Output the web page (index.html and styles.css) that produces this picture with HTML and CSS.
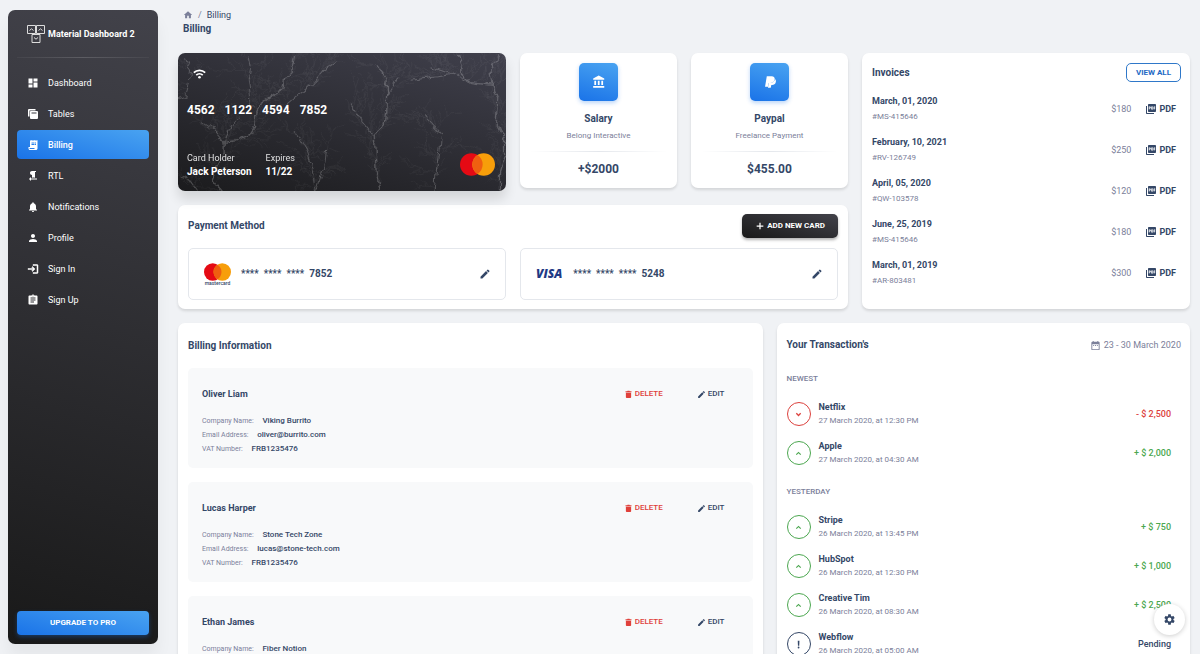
FILE: index.html
```html
<!DOCTYPE html>
<html lang="en">
<head>
<meta charset="utf-8">
<meta name="viewport" content="width=device-width, initial-scale=1">
<title>Billing - Material Dashboard 2</title>
<link rel="stylesheet" href="styles.css">
</head>
<body>
<svg class="sprite" aria-hidden="true">
  <symbol id="i-dashboard" viewBox="0 0 24 24"><path d="M3 13h8V3H3v10zm0 8h8v-6H3v6zm10 0h8V11h-8v10zm0-18v6h8V3h-8z"/></symbol>
  <symbol id="i-tables" viewBox="0 0 24 24"><path d="M2 4v13h3V5h12V2H4a2 2 0 0 0-2 2z"/><path fill-rule="evenodd" d="M8 6h12a2 2 0 0 1 2 2v12a2 2 0 0 1-2 2H8a2 2 0 0 1-2-2V8c0-1.100.9-2 2-2zm1 3v2h10V9z"/></symbol>
  <symbol id="i-billing" viewBox="0 0 24 24"><path fill-rule="evenodd" d="M19.500 3.500L18 2l-1.500 1.500L15 2l-1.500 1.500L12 2l-1.500 1.500L9 2 7.500 3.500 6 2v14H3v3c0 1.660 1.340 3 3 3h12c1.660 0 3-1.340 3-3V2l-1.500 1.500zM15 20H6c-.55 0-1-.45-1-1v-1h10v2zM9 7h6v2H9zm7 0h2v2h-2zm-7 3h6v2H9zm7 0h2v2h-2z"/></symbol>
  <symbol id="i-rtl" viewBox="0 0 24 24"><path d="M10 10v5h2V4h2v11h2V4h2V2h-8C7.790 2 6 3.790 6 6s1.790 4 4 4zm-2 7v-3l-4 4 4 4v-3h12v-2H8z"/><path d="M11 4h4v11h-4z"/></symbol>
  <symbol id="i-bell" viewBox="0 0 24 24"><path d="M12 22c1.100 0 2-.9 2-2h-4c0 1.100.89 2 2 2zm6-6v-5c0-3.070-1.640-5.640-4.500-6.320V4c0-.83-.67-1.500-1.500-1.500s-1.500.67-1.500 1.500v.68C7.630 5.360 6 7.920 6 11v5l-2 2v1h16v-1l-2-2z"/></symbol>
  <symbol id="i-person" viewBox="0 0 24 24"><path d="M12 12c2.210 0 4-1.790 4-4s-1.790-4-4-4-4 1.790-4 4 1.790 4 4 4zm0 2c-2.670 0-8 1.340-8 4v2h16v-2c0-2.660-5.330-4-8-4z"/></symbol>
  <symbol id="i-login" viewBox="0 0 24 24"><path d="M11 7L9.600 8.400l2.600 2.600H2v2h10.200l-2.600 2.600L11 17l5-5-5-5zm9 12h-8v2h8c1.100 0 2-.9 2-2V5c0-1.100-.9-2-2-2h-8v2h8v14z" stroke="currentColor"/></symbol>
  <symbol id="i-assignment" viewBox="0 0 24 24"><path d="M19 3h-4.180C14.400 1.840 13.300 1 12 1c-1.300 0-2.400.84-2.820 2H5c-1.100 0-2 .9-2 2v14c0 1.100.9 2 2 2h14c1.100 0 2-.9 2-2V5c0-1.100-.9-2-2-2zm-7 0c.55 0 1 .45 1 1s-.45 1-1 1-1-.45-1-1 .45-1 1-1zm2 14H7v-2h7v2zm3-4H7v-2h10v2zm0-4H7V7h10v2z"/></symbol>
  <symbol id="i-home" viewBox="0 0 24 24"><path d="M10 20v-6h4v6h5v-8h3L12 3 2 12h3v8z"/></symbol>
  <symbol id="i-wifi" viewBox="0 0 24 24"><g fill="none" stroke="currentColor" stroke-width="3.200"><path d="M1.500 10.500a15 15 0 0 1 21 0M6 15a8.800 8.800 0 0 1 12 0"/></g><circle cx="12" cy="19" r="2.400"/></symbol>
  <symbol id="i-bank" viewBox="0 0 24 24"><path d="M4 10v7h3v-7H4zm6 0v7h3v-7h-3zM2 22h19v-3H2v3zm14-12v7h3v-7h-3zm-4.500-9L2 6v2h19V6l-9.500-5z"/></symbol>
  <symbol id="i-paypal" viewBox="0 0 24 24"><path d="M6.500 2h8.200c4 0 6 2.200 5.300 5.800-.9 4.200-3.700 6-7.600 6H9.800L8.600 20H3.500z"/><path d="M20.500 7c1.800 1.700 2 3.500 1.400 5.500-.8 3-3 4.500-6.400 4.500h-1.200L13.300 22H8.500l.5-3 1-5.200h2.500c4.200 0 7.100-2.300 8-6.800z"/></symbol>
  <symbol id="i-edit" viewBox="0 0 24 24"><path d="M3 17.250V21h3.750L17.810 9.940l-3.750-3.750L3 17.250zM20.710 7.040a1 1 0 0 0 0-1.410l-2.340-2.340a1 1 0 0 0-1.410 0l-1.830 1.830 3.750 3.750 1.830-1.830z"/></symbol>
  <symbol id="i-delete" viewBox="0 0 24 24"><path d="M5 19c0 1.100.9 2 2 2h10c1.100 0 2-.9 2-2V7H5v12zM20 3h-4.500l-1-1h-5l-1 1H4v3h16V3z"/></symbol>
  <symbol id="i-add" viewBox="0 0 24 24"><path d="M20 13.500h-6.500V20h-3v-6.500H4v-3h6.500V4h3v6.500H20z"/></symbol>
  <symbol id="i-pdf" viewBox="0 0 24 24"><path d="M20 2H8c-1.100 0-2 .9-2 2v12c0 1.100.9 2 2 2h12c1.100 0 2-.9 2-2V4c0-1.100-.9-2-2-2zm-8.500 7.500c0 .83-.67 1.500-1.500 1.500H9v2H7.500V7H10c.83 0 1.500.67 1.500 1.500v1zm5 2c0 .83-.67 1.500-1.500 1.500h-2.500V7H15c.83 0 1.500.67 1.500 1.500v3zm4-3H19v1h1.500V11H19v2h-1.500V7h3v1.500zM9 9.500h1v-1H9v1zM4 6H2v14c0 1.100.9 2 2 2h14v-2H4V6zm10 5.500h1v-3h-1v3z"/></symbol>
  <symbol id="i-calendar" viewBox="0 0 24 24"><path d="M9 11H7v2h2v-2zm4 0h-2v2h2v-2zm4 0h-2v2h2v-2zm2-7h-1V2h-2v2H8V2H6v2H5c-1.110 0-2 .9-2 2v14a2 2 0 0 0 2 2h14c1.100 0 2-.9 2-2V6c0-1.100-.9-2-2-2zm0 16H5V9h14v11z"/></symbol>
  <symbol id="i-down" viewBox="0 0 24 24"><path d="M16.600 7.600L12 12.200 7.400 7.600 5 10l7 7 7-7z"/></symbol>
  <symbol id="i-up" viewBox="0 0 24 24"><path d="M12 7l-7 7 2.200 2.200L12 11.400l4.800 4.800L19 14z"/></symbol>
  <symbol id="i-exclaim" viewBox="0 0 24 24"><path d="M10 2h4.500l-.5 13h-3.500z"/><circle cx="12.200" cy="20" r="2.400"/></symbol>
  <symbol id="i-gear" viewBox="0 0 24 24"><path d="M19.140 12.940c.04-.3.060-.61.060-.94 0-.32-.02-.64-.07-.94l2.030-1.580a.49.49 0 0 0 .12-.61l-1.920-3.320a.49.49 0 0 0-.59-.22l-2.390.96c-.5-.38-1.030-.7-1.620-.94l-.36-2.540a.48.48 0 0 0-.48-.41h-3.840c-.24 0-.43.17-.47.41l-.36 2.540c-.59.24-1.130.57-1.620.94l-2.390-.96a.48.48 0 0 0-.59.22L2.740 8.870c-.12.21-.08.47.12.61l2.030 1.580c-.05.3-.09.63-.09.94s.02.64.07.94l-2.030 1.580a.49.49 0 0 0-.12.61l1.920 3.320c.12.22.37.29.59.22l2.390-.96c.5.38 1.030.7 1.620.94l.36 2.540c.05.24.24.41.48.41h3.840c.24 0 .44-.17.47-.41l.36-2.540c.59-.24 1.130-.56 1.620-.94l2.390.96c.22.08.47 0 .59-.22l1.920-3.320a.49.49 0 0 0-.12-.61l-2.010-1.580zM12 15.600a3.600 3.600 0 1 1 0-7.200 3.600 3.600 0 0 1 0 7.200z"/></symbol>
  <symbol id="i-rings" viewBox="0 0 34 22"><circle cx="11" cy="11" r="11" fill="#e50a14"/><circle cx="23" cy="11" r="11" fill="#f79e0a"/><path fill="#ef5f10" d="M17 1.780a11 11 0 0 1 0 18.440 11 11 0 0 1 0-18.440z"/></symbol>
</svg>

<div class="app">
  <aside class="sidebar">
    <a class="brand" href="#">
      <svg class="brand-logo" viewBox="0 0 18 18" fill="none" stroke="#ddd" aria-hidden="true"><path d="M.5 .5h8v8h-8zM9.500 .5h8v8h-8zM5 9.500h8v8H5z"/><path d="M2.500 5.500l2-1.700 2 1.700M11.500 5.500l2-1.700 2 1.700M7 12.500l2 1.700 2-1.700"/></svg>
      <span>Material Dashboard 2</span>
    </a>
    <hr class="sidebar-rule">
    <nav class="menu">
      <a href="#"><svg><use href="#i-dashboard"/></svg>Dashboard</a>
      <a href="#"><svg><use href="#i-tables"/></svg>Tables</a>
      <a href="#" class="active" aria-current="page"><svg><use href="#i-billing"/></svg>Billing</a>
      <a href="#"><svg><use href="#i-rtl"/></svg>RTL</a>
      <a href="#"><svg><use href="#i-bell"/></svg>Notifications</a>
      <a href="#"><svg><use href="#i-person"/></svg>Profile</a>
      <a href="#"><svg><use href="#i-login"/></svg>Sign In</a>
      <a href="#"><svg><use href="#i-assignment"/></svg>Sign Up</a>
    </nav>
    <a class="upgrade" href="#">UPGRADE TO PRO</a>
  </aside>

  <main class="main">
    <header class="page-head">
      <nav class="crumbs" aria-label="Breadcrumb">
        <a href="#" aria-label="Home"><svg><use href="#i-home"/></svg></a><span class="slash">/</span><span>Billing</span>
      </nav>
      <h1>Billing</h1>
    </header>

    <div class="grid">
      <div class="wallet">
        <section class="bank-card">
          <svg class="branches" viewBox="24 24 984 411" preserveAspectRatio="xMidYMid slice" aria-hidden="true">
            <filter id="rough" x="0" y="0" width="1" height="1"><feTurbulence type="fractalNoise" baseFrequency="0.04" numOctaves="2" seed="4"/><feDisplacementMap in="SourceGraphic" scale="22" xChannelSelector="R" yChannelSelector="G"/></filter>
            <g filter="url(#rough)" fill="none" stroke="#fff">
              <g id="twigs" stroke-width="1.500"></g>
              <g id="limbs" stroke-width="3">
                <path class="thick" d="M158 435L130 400 140 370 165 325 165 290 200 285 240 268 255 245 260 200 270 180 310 150 340 130 345 100 365 75 375 30"/>
                <path d="M165 290L180 255 190 235 215 220"/>
                <path d="M165 290L130 250 100 230"/>
                <path d="M345 185L380 155 430 115 470 70 500 50"/>
                <path d="M245 190L240 150 235 110 245 60 240 35"/>
                <path d="M24 165L50 155 60 120 65 80 50 40"/>
                <path class="thick" d="M630 435L618 380 612 270 645 235 650 190 652 145 650 100 620 55"/>
                <path d="M612 270L575 225 545 180"/>
                <path d="M651 150L680 100"/>
                <path class="thick" d="M985 435L985 380 1000 330 1000 280 975 230 980 160 965 120 900 112 870 85 870 60 860 30"/>
                <path d="M900 112L850 90 780 65"/>
                <path d="M965 120L960 80 985 30"/>
                <path d="M440 435L430 370 410 310 380 260"/>
                <path d="M440 435L465 350 470 310"/>
                <path d="M790 435L800 350 810 265 760 210"/>
                <path d="M85 435L60 400 35 390"/>
                <path d="M720 105L800 95 840 88"/>
              </g>
            </g>
          </svg>
          <svg class="wifi" aria-hidden="true"><use href="#i-wifi"/></svg>
          <p class="card-number"><span>4562</span><span>1122</span><span>4594</span><span>7852</span></p>
          <div class="card-foot">
            <dl><dt>Card Holder</dt><dd>Jack Peterson</dd></dl>
            <dl><dt>Expires</dt><dd>11/22</dd></dl>
            <svg class="card-rings" aria-hidden="true"><use href="#i-rings"/></svg>
          </div>
        </section>
        <section class="card stat">
          <span class="stat-icon"><svg><use href="#i-bank"/></svg></span>
          <h2>Salary</h2><p>Belong Interactive</p><hr><strong>+$2000</strong>
        </section>
        <section class="card stat">
          <span class="stat-icon"><svg><use href="#i-paypal"/></svg></span>
          <h2>Paypal</h2><p>Freelance Payment</p><hr><strong>$455.00</strong>
        </section>

        <section class="card payment">
          <div class="card-head">
            <h2>Payment Method</h2>
            <button class="add" type="button"><svg><use href="#i-add"/></svg>ADD NEW CARD</button>
          </div>
          <div class="methods">
            <div class="method">
              <span class="mc"><svg><use href="#i-rings"/></svg><small>mastercard</small></span>
              <span class="digits"><span>****</span><span>****</span><span>****</span><span>7852</span></span>
              <button type="button" aria-label="Edit Mastercard"><svg><use href="#i-edit"/></svg></button>
            </div>
            <div class="method">
              <span class="visa">VISA</span>
              <span class="digits"><span>****</span><span>****</span><span>****</span><span>5248</span></span>
              <button type="button" aria-label="Edit Visa"><svg><use href="#i-edit"/></svg></button>
            </div>
          </div>
        </section>
      </div>

      <section class="card invoices">
        <div class="card-head"><h2>Invoices</h2><button class="view-all" type="button">VIEW ALL</button></div>
        <ul>
          <li><div><h3>March, 01, 2020</h3><p>#MS-415646</p></div><span>$180</span><a href="#"><svg><use href="#i-pdf"/></svg>PDF</a></li>
          <li><div><h3>February, 10, 2021</h3><p>#RV-126749</p></div><span>$250</span><a href="#"><svg><use href="#i-pdf"/></svg>PDF</a></li>
          <li><div><h3>April, 05, 2020</h3><p>#QW-103578</p></div><span>$120</span><a href="#"><svg><use href="#i-pdf"/></svg>PDF</a></li>
          <li><div><h3>June, 25, 2019</h3><p>#MS-415646</p></div><span>$180</span><a href="#"><svg><use href="#i-pdf"/></svg>PDF</a></li>
          <li><div><h3>March, 01, 2019</h3><p>#AR-803481</p></div><span>$300</span><a href="#"><svg><use href="#i-pdf"/></svg>PDF</a></li>
        </ul>
      </section>

      <section class="card info">
        <h2>Billing Information</h2>
        <article>
          <header><h3>Oliver Liam</h3><button class="del" type="button"><svg><use href="#i-delete"/></svg>DELETE</button><button class="edit" type="button"><svg><use href="#i-edit"/></svg>EDIT</button></header>
          <p>Company Name: <b>Viking Burrito</b></p><p>Email Address: <b>oliver@burrito.com</b></p><p>VAT Number: <b>FRB1235476</b></p>
        </article>
        <article>
          <header><h3>Lucas Harper</h3><button class="del" type="button"><svg><use href="#i-delete"/></svg>DELETE</button><button class="edit" type="button"><svg><use href="#i-edit"/></svg>EDIT</button></header>
          <p>Company Name: <b>Stone Tech Zone</b></p><p>Email Address: <b>lucas@stone-tech.com</b></p><p>VAT Number: <b>FRB1235476</b></p>
        </article>
        <article>
          <header><h3>Ethan James</h3><button class="del" type="button"><svg><use href="#i-delete"/></svg>DELETE</button><button class="edit" type="button"><svg><use href="#i-edit"/></svg>EDIT</button></header>
          <p>Company Name: <b>Fiber Notion</b></p><p>Email Address: <b>ethan@fiber.com</b></p><p>VAT Number: <b>FRB1235476</b></p>
        </article>
      </section>

      <section class="card transactions">
        <div class="card-head"><h2>Your Transaction's</h2><span class="range"><svg><use href="#i-calendar"/></svg>23 - 30 March 2020</span></div>
        <h3>NEWEST</h3>
        <ul>
          <li class="out"><i><svg><use href="#i-down"/></svg></i><div><h4>Netflix</h4><p>27 March 2020, at 12:30 PM</p></div><span>- $ 2,500</span></li>
          <li class="in"><i><svg><use href="#i-up"/></svg></i><div><h4>Apple</h4><p>27 March 2020, at 04:30 AM</p></div><span>+ $ 2,000</span></li>
        </ul>
        <h3>YESTERDAY</h3>
        <ul>
          <li class="in"><i><svg><use href="#i-up"/></svg></i><div><h4>Stripe</h4><p>26 March 2020, at 13:45 PM</p></div><span>+ $ 750</span></li>
          <li class="in"><i><svg><use href="#i-up"/></svg></i><div><h4>HubSpot</h4><p>26 March 2020, at 12:30 PM</p></div><span>+ $ 1,000</span></li>
          <li class="in"><i><svg><use href="#i-up"/></svg></i><div><h4>Creative Tim</h4><p>26 March 2020, at 08:30 AM</p></div><span>+ $ 2,500</span></li>
          <li class="wait"><i><svg><use href="#i-exclaim"/></svg></i><div><h4>Webflow</h4><p>26 March 2020, at 05:00 AM</p></div><span>Pending</span></li>
        </ul>
      </section>
    </div>
  </main>
</div>
<button class="settings" type="button" aria-label="Settings"><svg><use href="#i-gear"/></svg></button>
<script src="branches.js"></script>
</body>
</html>
```
FILE: styles.css
```css
* { box-sizing: border-box; }
body, h1, h2, h3, h4, p, ul, dl, dd { margin: 0; padding: 0; }
body {
  background: #f0f2f5;
  color: #344767;
  font-family: Roboto, "Liberation Sans", sans-serif;
  font-size: 9px;
  line-height: 14px;
}
ul { list-style: none; }
a { color: inherit; text-decoration: none; }
button { font: inherit; color: inherit; background: none; border: 0; padding: 0; cursor: pointer; }
svg { display: block; flex: none; fill: currentColor; }
.sprite { position: absolute; width: 0; height: 0; }
h1, h2 { font-size: 10px; font-weight: 700; line-height: 16px; }

.app { display: flex; height: 100vh; }

/* Sidebar */
.sidebar {
  display: flex;
  flex-direction: column;
  flex: none;
  width: 150px;
  margin: 10px 0 10px 8px;
  padding: 0 9px 9px;
  border-radius: 7px;
  background: linear-gradient(195deg, #42424a, #191919);
  box-shadow: 0 12px 16px rgba(0, 0, 0, .05);
  color: #fff;
}
.brand {
  display: flex;
  align-items: center;
  gap: 3px;
  height: 47px;
  padding-left: 10px;
  font-weight: 700;
  white-space: nowrap;
}
.brand-logo { width: 18px; height: 18px; fill: none; }
.sidebar-rule {
  width: 100%;
  height: 1px;
  margin: 0 0 10px;
  border: 0;
  background: linear-gradient(90deg, rgba(255, 255, 255, .04), rgba(255, 255, 255, .16), rgba(255, 255, 255, .04));
}
.menu { display: flex; flex-direction: column; gap: 2px; }
.menu a {
  display: flex;
  align-items: center;
  gap: 9px;
  height: 29px;
  padding-left: 10px;
  border-radius: 4px;
}
.menu svg { width: 12px; height: 12px; }
.menu .active, .upgrade { background: linear-gradient(15deg, #1a73e8, #49a3f1); }
.menu .active { font-weight: 500; }
.upgrade {
  margin-top: auto;
  border-radius: 4px;
  font-size: 8px;
  font-weight: 700;
  line-height: 24px;
  text-align: center;
  box-shadow: 0 2px 4px rgba(26, 115, 232, .35);
}

/* Page */
.main {
  flex: 1;
  min-width: 0;
  padding: 9px 10px 14px 20px;
  overflow-y: auto;
  scrollbar-width: none;
}
.page-head { height: 44px; padding-left: 5px; }
.crumbs { display: flex; align-items: center; gap: 5px; line-height: 12px; }
.crumbs svg { width: 10px; height: 10px; color: #7b809a; }
.slash { color: #7b809a; }
.grid, .wallet { display: grid; grid-template-columns: repeat(12, minmax(0, 1fr)); gap: 14px; }
.card {
  border-radius: 7px;
  background: #fff;
  box-shadow: 0 2px 3px rgba(0, 0, 0, .12);
}
.card-head { display: flex; align-items: center; justify-content: space-between; }

.wallet { grid-column: span 8; grid-template-columns: repeat(4, minmax(0, 1fr)); align-items: start; }
.bank-card {
  position: relative;
  grid-column: span 2;
  display: flex;
  flex-direction: column;
  padding: 14px 11px 12px 9px;
  border-radius: 7px;
  overflow: hidden;
  background: linear-gradient(195deg, #40404c, #1b1b1d);
  box-shadow: 0 8px 12px rgba(0, 0, 0, .12);
  color: #fff;
}
.bank-card > :not(.branches) { position: relative; }
.branches { position: absolute; inset: 0; width: 100%; height: 100%; fill: none; }
#limbs { opacity: .2; }
#limbs .thick { stroke-width: 4; }
#twigs { opacity: .07; }
.wifi { width: 13px; height: 13px; margin-left: 6px; }
.card-number { display: flex; gap: 10px; margin: 21px 0 32px; font-size: 12px; font-weight: 700; line-height: 18px; }
.card-foot { display: flex; align-items: flex-end; gap: 14px; }
.card-foot dt { opacity: .85; }
.card-foot dd { font-size: 10px; font-weight: 700; }
.card-rings { width: 35px; height: 23px; margin: 0 0 3px auto; }

.stat { display: flex; flex-direction: column; align-items: center; padding: 10px; }
.stat-icon {
  display: grid;
  place-items: center;
  width: 39px;
  height: 38px;
  margin-bottom: 10px;
  border-radius: 5px;
  background: linear-gradient(195deg, #49a3f1, #1a73e8);
  box-shadow: 0 2px 4px rgba(26, 115, 232, .3);
  color: #fff;
}
.stat-icon svg { width: 14px; height: 14px; }
.stat p { margin-top: 3px; color: #7b809a; font-size: 8px; line-height: 12px; }
.stat hr {
  width: 100%;
  height: 1px;
  margin: 9px 0 8px;
  border: 0;
  background: linear-gradient(90deg, #fff, #e4e7ec, #fff);
}
.stat strong { font-size: 12px; font-weight: 700; line-height: 18px; }

.payment { grid-column: 1 / -1; padding: 9px 10px; }
.add {
  display: flex;
  align-items: center;
  gap: 2px;
  height: 24px;
  padding: 0 13px;
  border-radius: 5px;
  background: linear-gradient(195deg, #42424a, #191919);
  box-shadow: 0 2px 3px rgba(0, 0, 0, .3);
  color: #fff;
  font-size: 8px;
  font-weight: 700;
}
.add svg { width: 10px; height: 10px; }
.methods { display: grid; grid-template-columns: 1fr 1fr; gap: 14px; margin-top: 10px; }
.method {
  display: flex;
  align-items: center;
  height: 52px;
  padding: 0 14px 0 15px;
  border: 1px solid #e4e7ec;
  border-radius: 5px;
}
.mc { width: 27px; margin-right: 10px; text-align: center; }
.mc svg { width: 27px; height: 18px; }
.mc small { display: flex; justify-content: center; font-size: 5px; font-weight: 500; line-height: 5px; }
.visa { margin-right: 11px; color: #1f3a85; font-family: "Open Sans", sans-serif; font-size: 12px; font-style: italic; font-weight: 800; }
.digits { display: flex; gap: 5px; font-size: 10px; font-weight: 500; }
.digits span:last-child { font-weight: 700; }
.method button { margin-left: auto; }
.method button svg { width: 12px; height: 12px; }

.invoices { grid-column: span 4; padding: 10px 9px 10px 10px; }
.view-all { height: 19px; padding: 0 9px; border: 1px solid #2f78c9; border-radius: 5px; color: #2469c4; font-size: 8px; font-weight: 700; }
.invoices ul { margin-top: 11px; }
.invoices li { display: flex; align-items: center; height: 41px; padding: 0 5px 10px 0; }
.invoices li div { flex: 1; }
.invoices h3 { font-size: 9px; font-weight: 700; line-height: 16px; }
.invoices p { color: #7b809a; font-size: 8px; line-height: 15px; }
.invoices li span { margin-right: 14px; color: #7b809a; }
.invoices li a { display: flex; align-items: center; gap: 2px; font-weight: 700; }
.invoices li svg { width: 12px; height: 12px; }

.info { grid-column: span 7; padding: 14px 10px 10px; }
.info h2 { line-height: 18px; margin-bottom: 13px; }
.info article { min-height: 100px; padding: 18px 28px 12px 14px; border-radius: 5px; background: #f8f9fa; }
.info article + article { margin-top: 14px; }
.info header { display: flex; align-items: center; height: 16px; margin-bottom: 12px; }
.info h3 { flex: 1; font-size: 9px; font-weight: 700; }
.info button { display: flex; align-items: center; gap: 2px; font-size: 8px; font-weight: 500; }
.info button svg { width: 9px; height: 9px; }
.info .del { margin-right: 34px; color: #e0403a; }
.info p { color: #7b809a; font-size: 7px; line-height: 14px; }
.info b { margin-left: 7px; color: #344767; font-size: 8px; font-weight: 500; line-height: 1; }

.transactions { grid-column: span 5; padding: 12px 9px 12px 10px; }
.transactions .card-head { height: 20px; }
.range { display: flex; align-items: center; gap: 3px; color: #7b809a; }
.range svg { width: 11px; height: 11px; }
.transactions h3 { margin-top: 17px; color: #7b809a; font-size: 8px; font-weight: 500; }
.transactions ul { display: grid; gap: 9px; margin-top: 13px; }
.transactions li { display: flex; align-items: center; gap: 8px; height: 30px; padding-right: 10px; }
.transactions i { display: grid; place-items: center; width: 24px; height: 24px; border: 1px solid; border-radius: 50%; }
.transactions i svg { width: 9px; height: 9px; }
.transactions li div { flex: 1; }
.transactions h4 { font-size: 9px; font-weight: 700; }
.transactions p { color: #7b809a; font-size: 8px; }
.transactions li span { font-weight: 500; }
.out i, .out span { color: #dc413d; }
.in i, .in span { color: #4ca750; }

.settings {
  position: fixed;
  right: 15px;
  bottom: 19px;
  display: grid;
  place-items: center;
  width: 31px;
  height: 31px;
  border-radius: 50%;
  background: #fff;
  box-shadow: 0 1px 5px rgba(0, 0, 0, .2);
}
.settings svg { width: 13px; height: 13px; }
```
FILE: branches.js
```js
// Grows fine twigs from each limb of the bank card's tree pattern.
let seed = 7;
const rand = () => (seed = (seed * 16807) % 2147483647) / 2147483647;
const twigs = document.getElementById('twigs');

function grow(x, y, angle, length, depth) {
  let d = `M${x.toFixed(1)} ${y.toFixed(1)}`;
  const steps = 4;
  for (let i = 0; i < steps; i++) {
    angle += (rand() - 0.5) * 0.5;
    x += Math.cos(angle) * length / steps;
    y += Math.sin(angle) * length / steps;
    d += `L${x.toFixed(1)} ${y.toFixed(1)}`;
    if (depth > 0) grow(x, y, angle + (rand() > 0.5 ? 0.6 : -0.6), length * 0.5, depth - 1);
  }
  const path = document.createElementNS('http://www.w3.org/2000/svg', 'path');
  path.setAttribute('d', d);
  twigs.appendChild(path);
}

document.querySelectorAll('#limbs path').forEach((limb) => {
  const total = limb.getTotalLength();
  for (let at = 10; at < total; at += 20) {
    const p = limb.getPointAtLength(at);
    grow(p.x, p.y, -Math.PI / 2 + (rand() - 0.5) * 3, 40 + rand() * 50, 1);
  }
});
```
